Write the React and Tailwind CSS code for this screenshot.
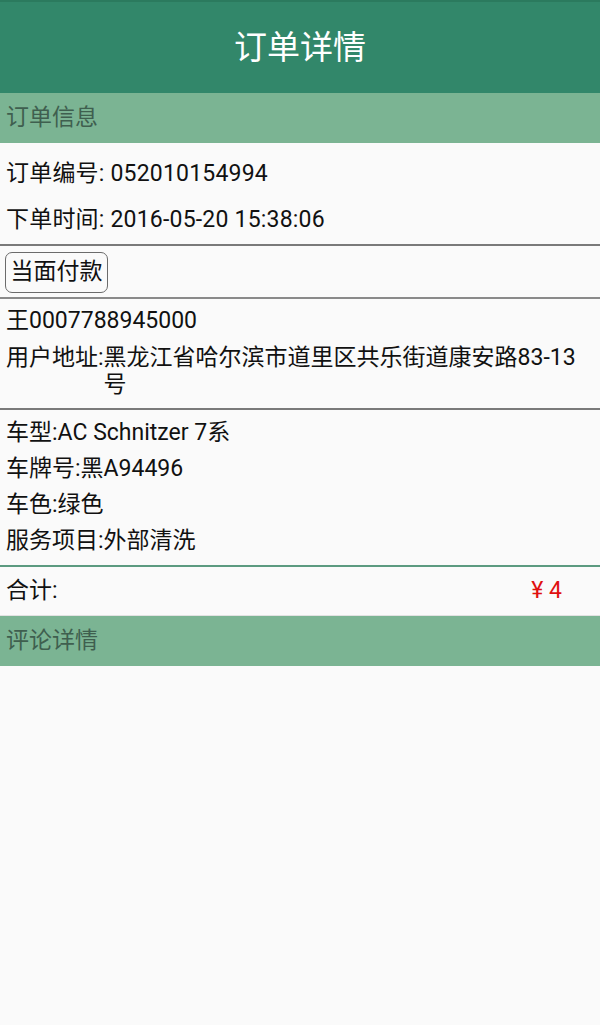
export default function App() {
  const font = { fontFamily: '"Roboto", "Noto Sans CJK SC", sans-serif' };
  return (
    <div className="w-[600px] h-[1025px] bg-[#fafafa] flex flex-col text-[#111] text-[23px]" style={font}>
      <div className="h-[93px] shrink-0 bg-[#32876a] border-t-[2px] border-[#2b7a5e] flex items-center justify-center">
        <span className="text-white text-[33px] leading-none">订单详情</span>
      </div>
      <div className="h-[50px] shrink-0 bg-[#7bb493] flex items-center pl-[6px] text-[#3f5f4f] text-[23px]">订单信息</div>

      <div className="pt-[8px] flex flex-col px-[6px]">
        <div className="h-[46px] flex items-center tracking-[0.2px]">订单编号: 052010154994</div>
        <div className="h-[46px] flex items-center tracking-[0.2px]">下单时间: 2016-05-20 15:38:06</div>
      </div>
      <div className="h-[2px] mt-[1px] bg-[#7a7a7a]" />

      <div className="pt-[6px] pb-[4px] px-[5px]">
        <div className="w-[103px] h-[41px] border-[1.5px] border-[#6b6b6b] rounded-[7px] flex items-center justify-center text-[23px] bg-[#fafafa]">当面付款</div>
      </div>
      <div className="h-[2px] bg-[#8a8a8a]" />

      <div className="pt-[8px] pb-[10px] px-[6px] flex flex-col gap-[10px] leading-[27px]">
        <div>王0007788945000</div>
        <div className="flex">
          <span className="shrink-0">用户地址:</span>
          <span>黑龙江省哈尔滨市道里区共乐街道康安路83-13号</span>
        </div>
      </div>
      <div className="h-[2px] bg-[#7a7a7a]" />

      <div className="pt-[5px] pb-[5px] px-[6px] flex flex-col">
        <div className="h-[36px] flex items-center">车型:AC Schnitzer 7系</div>
        <div className="h-[36px] flex items-center">车牌号:黑A94496</div>
        <div className="h-[36px] flex items-center">车色:绿色</div>
        <div className="h-[37px] flex items-center">服务项目:外部清洗</div>
      </div>
      <div className="h-[2px] bg-[#5c9a80]" />

      <div className="h-[49px] flex items-center justify-between pl-[6px] pr-[38px] border-b border-[#e2e2e2]">
        <span>合计:</span>
        <span className="text-[#e01010]">¥ 4</span>
      </div>
      <div className="h-[50px] shrink-0 bg-[#7bb493] flex items-center pl-[6px] text-[#3f5f4f] text-[23px]">评论详情</div>
      <div className="flex-1" />
    </div>
  );
}
